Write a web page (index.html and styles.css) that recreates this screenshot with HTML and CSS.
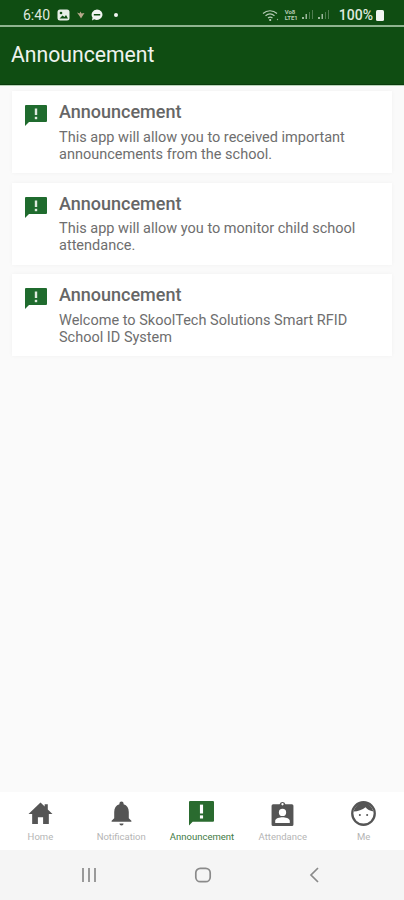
FILE: index.html
```html
<!DOCTYPE html>
<html lang="en">
<head>
    <meta charset="UTF-8">
    <meta name="viewport" content="width=device-width, initial-scale=1.0">
    <title>Announcement</title>
    <link rel="stylesheet" href="styles.css">
</head>
<body>
    <div class="phone">
        <div class="status-bar">
            <span class="time">6:40</span>
            <svg class="st-icon" width="13" height="12" viewBox="0 0 13 12"><rect x="0.5" y="0.5" width="12" height="11" rx="2.5" fill="#e8efe8"/><circle cx="4" cy="4" r="1.3" fill="#0f4d12"/><path d="M2.5 9.5l3-3 2 1.5 1.5-2 2 3.5z" fill="#0f4d12"/></svg>
            <svg class="st-icon" width="9" height="8" viewBox="0 0 9 8"><path d="M1 1.500l2.500 1L4.500 0.500l1 2 3-0.500-2 3-1.500 2.500-1.500-2.500z" fill="#b9a98c"/></svg>
            <svg class="st-icon" width="12" height="12" viewBox="0 0 12 12"><path d="M6 0.500a5.500 5.200 0 1 1-2.800 9.700L1 11.500l0.500-3A5.500 5.200 0 0 1 6 0.500z" fill="#f2f5f2"/><rect x="2.800" y="5" width="6.400" height="1.500" fill="#0f4d12"/></svg>
            <span class="st-dot"></span>
            <span class="st-right">
                <svg width="17" height="13" viewBox="0 0 17 13"><path d="M1 4.500C5 0.800 11 0.800 15 4.500M3.500 6.800c2.800-2.400 6.200-2.400 9 0M6 9c1.500-1.200 3-1.200 4.500 0" fill="none" stroke="#b5cbb5" stroke-width="1.200"/><circle cx="8.200" cy="11" r="1.100" fill="#c9d8c9"/><circle cx="15.500" cy="10.500" r="0.700" fill="#8fae8f"/></svg>
                <span class="volte">Vo8<br>LTE1</span>
                <svg width="13" height="10" viewBox="0 0 13 10"><path d="M1 9h2V7H1zM4.500 9h1.500V4H4.500z" fill="#9db89d"/><path d="M8 9h1V2H8zM11 9h1V0h-1z" fill="#4f7d50"/></svg>
                <svg width="13" height="10" viewBox="0 0 13 10"><path d="M1 9h2V7H1zM4.500 9h1.500V4H4.500z" fill="#9db89d"/><path d="M8 9h1V2H8zM11 9h1V0h-1z" fill="#4f7d50"/></svg>
                <span class="battery-text">100%</span>
                <span class="battery"></span>
            </span>
        </div>
        <div class="app-bar">Announcement</div>
        <main class="content">
            <div class="card">
                <svg class="card-icon" viewBox="1 1 22 21"><path d="M2 1h20a1 1 0 0 1 1 1v15a1 1 0 0 1-1 1H5l-4 4V2a1 1 0 0 1 1-1z" fill="#1f6b2e"/><rect x="10.800" y="4.500" width="2.400" height="6.500" fill="#dfeadf"/><rect x="10.800" y="12.800" width="2.400" height="2.400" fill="#dfeadf"/></svg>
                <div class="card-text">
                    <div class="card-title">Announcement</div>
                    <p class="card-body">This app will allow you to received important announcements from the school.</p>
                </div>
            </div>
            <div class="card">
                <svg class="card-icon" viewBox="1 1 22 21"><path d="M2 1h20a1 1 0 0 1 1 1v15a1 1 0 0 1-1 1H5l-4 4V2a1 1 0 0 1 1-1z" fill="#1f6b2e"/><rect x="10.800" y="4.500" width="2.400" height="6.500" fill="#dfeadf"/><rect x="10.800" y="12.800" width="2.400" height="2.400" fill="#dfeadf"/></svg>
                <div class="card-text">
                    <div class="card-title">Announcement</div>
                    <p class="card-body">This app will allow you to monitor child school attendance.</p>
                </div>
            </div>
            <div class="card">
                <svg class="card-icon" viewBox="1 1 22 21"><path d="M2 1h20a1 1 0 0 1 1 1v15a1 1 0 0 1-1 1H5l-4 4V2a1 1 0 0 1 1-1z" fill="#1f6b2e"/><rect x="10.800" y="4.500" width="2.400" height="6.500" fill="#dfeadf"/><rect x="10.800" y="12.800" width="2.400" height="2.400" fill="#dfeadf"/></svg>
                <div class="card-text">
                    <div class="card-title">Announcement</div>
                    <p class="card-body">Welcome to SkoolTech Solutions Smart RFID School ID System</p>
                </div>
            </div>
        </main>
        <nav class="bottom-nav">
            <div class="nav-item">
                <svg class="nav-icon" viewBox="0 0 24 24"><path d="M12 1.500L0.500 12.500h3.500V22h5.500v-6.500h5V22H20v-9.500h3.500L19 8.200V3h-3v2.300z" fill="#555"/></svg>
                <span>Home</span>
            </div>
            <div class="nav-item">
                <svg class="nav-icon" viewBox="0 0 24 24"><path d="M12 0.500a2 2 0 0 1 2 2v0.700c3.300 1 5 3.800 5 7.300v6l2.500 2.500v1H2.500v-1L5 16.500v-6c0-3.500 1.700-6.300 5-7.300V2.500a2 2 0 0 1 2-2z" fill="#555"/><path d="M10 21.500h4a2 2 0 0 1-4 0z" fill="#555"/></svg>
                <span>Notification</span>
            </div>
            <div class="nav-item active">
                <svg class="nav-icon" viewBox="0 0 24 24"><path d="M1 0h22a1 1 0 0 1 1 1v18a1 1 0 0 1-1 1H3.500L0 23.500V1a1 1 0 0 1 1-1z" fill="#2a6b2f"/><rect x="10.500" y="3.500" width="3" height="8.500" fill="#fff"/><rect x="10.500" y="13.800" width="3" height="3" fill="#fff"/></svg>
                <span>Announcement</span>
            </div>
            <div class="nav-item">
                <svg class="nav-icon" viewBox="0 0 24 24"><path fill-rule="evenodd" d="M3 3h6.200a3 3 0 0 1 5.600 0H21a1.500 1.500 0 0 1 1.500 1.500v18A1.500 1.500 0 0 1 21 24H3a1.500 1.500 0 0 1-1.500-1.500v-18A1.500 1.500 0 0 1 3 3zm9-1a1.100 1.100 0 1 0 0 2.200A1.100 1.100 0 0 0 12 2zm0 5.500a3.500 3.500 0 1 0 0 7 3.500 3.500 0 0 0 0-7zM5 21h14v-2c0-2.500-4.500-3.500-7-3.500S5 16.500 5 19z" fill="#555"/></svg>
                <span>Attendance</span>
            </div>
            <div class="nav-item">
                <svg class="nav-icon" viewBox="0 0 24 24"><circle cx="12" cy="12" r="10.800" fill="#fff" stroke="#555" stroke-width="2.200"/><path d="M2.500 10C4 5 8 1.500 12 1.500S20 5 21.500 10C18 9.500 15.500 8 14 6 11 8.500 6.500 10 2.500 10z" fill="#555"/><circle cx="8.500" cy="13.500" r="1" fill="#555"/><circle cx="15.500" cy="13.500" r="1" fill="#555"/></svg>
                <span>Me</span>
            </div>
        </nav>
        <div class="system-nav">
            <svg width="16" height="16" viewBox="0 0 16 16"><path d="M2 1v14M8 1v14M14 1v14" stroke="#8a8a8a" stroke-width="1.700" fill="none"/></svg>
            <svg width="18" height="16" viewBox="0 0 18 16"><rect x="1.800" y="1.300" width="14.400" height="13.400" rx="4.500" stroke="#8a8a8a" stroke-width="1.700" fill="none"/></svg>
            <svg width="12" height="16" viewBox="0 0 12 16"><path d="M10 1L3 8l7 7" stroke="#8a8a8a" stroke-width="1.700" fill="none"/></svg>
        </div>
    </div>
</body>
</html>
```

FILE: styles.css
```css
* {
    box-sizing: border-box;
}
body {
    margin: 0;
    font-family: Roboto, "Liberation Sans", sans-serif;
    background-color: #fafafa;
}
.phone {
    display: flex;
    flex-direction: column;
    height: 900px;
    overflow: hidden;
}
.status-bar {
    display: flex;
    align-items: center;
    gap: 6px;
    height: 27px;
    padding: 5px 20px 0 23px;
    background-color: #0f4d12;
    border-bottom: 2px solid #8fb48f;
    color: #dfe8df;
}
.time {
    font-size: 14px;
    margin-right: 1px;
}
.st-dot {
    width: 4px;
    height: 4px;
    margin-left: 5px;
    border-radius: 50%;
    background: #f2f5f2;
}
.st-right {
    display: flex;
    align-items: center;
    gap: 3px;
    margin-left: auto;
}
.st-right svg:first-child {
    margin-right: 3px;
}
.volte {
    font-size: 6px;
    line-height: 6px;
    font-weight: 700;
    color: #b5cbb5;
}
.battery-text {
    font-size: 14px;
    font-weight: 500;
    margin-left: 6px;
}
.battery {
    width: 8px;
    height: 11px;
    border-radius: 1.500px;
    background: #f2f5f2;
}
.app-bar {
    display: flex;
    align-items: center;
    height: 58px;
    padding-left: 11px;
    padding-bottom: 2px;
    background-color: #0f4d12;
    border-bottom: 1px solid #0a3a0d;
    color: #eef3ee;
    font-size: 21.2px;
    font-weight: 400;
}
.content {
    flex: 1;
    display: flex;
    flex-direction: column;
    gap: 9.5px;
    padding: 5px 12px 0;
    background-color: #fafafa;
    border-top: 1px solid #b8d4b8;
}
.card {
    display: flex;
    gap: 12px;
    height: 82px;
    padding: 10px 13px 0;
    background: #fff;
    box-shadow: 0 0 4px rgba(0, 0, 0, 0.04);
}
.card-icon {
    flex: none;
    width: 22px;
    height: 21px;
    margin-top: 4px;
}
.card-title {
    font-size: 18px;
    font-weight: 500;
    line-height: 21px;
    color: #666;
}
.card-body {
    margin: 6.5px 0 0;
    font-size: 14.5px;
    line-height: 17px;
    color: #6e6e6e;
}
.bottom-nav {
    display: flex;
    height: 58px;
    padding-top: 9px;
    background: #fff;
}
.nav-item {
    flex: 1;
    display: flex;
    flex-direction: column;
    align-items: center;
    gap: 5px;
    font-size: 9.5px;
    color: #b5b5b5;
}
.nav-item.active {
    color: #3f7a44;
}
.nav-icon {
    width: 25px;
    height: 25px;
}
.system-nav {
    display: flex;
    align-items: center;
    justify-content: space-between;
    height: 50px;
    padding: 0 84px 0 81px;
    background-color: #f5f5f5;
}
```
